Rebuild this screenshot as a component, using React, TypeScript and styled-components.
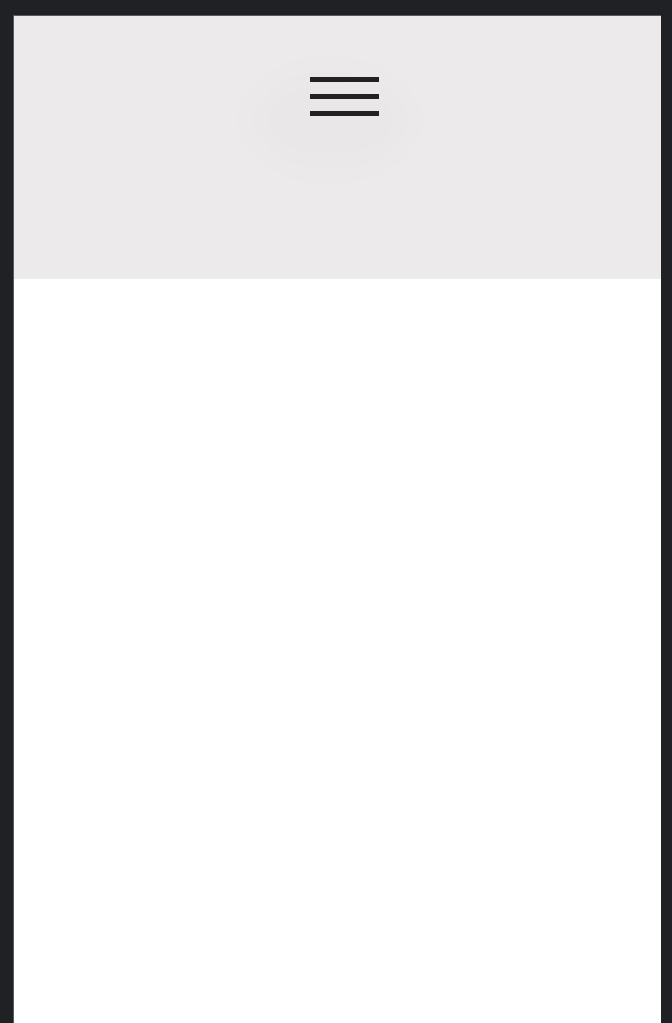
import React, { FC } from "react";
import styled, { createGlobalStyle } from "styled-components";

const GlobalStyle = createGlobalStyle`
  html, body {
    margin: 0;
    padding: 0;
    height: 100%;
    background: #202124;
    font-family: "Liberation Sans", Arial, sans-serif;
  }
  #root {
    height: 100%;
  }
`;

const Frame = styled.div`
  box-sizing: border-box;
  height: 100%;
  padding: 15px 11px 0 13px;
`;

const Screen = styled.div`
  height: 100%;
  background: #ffffff;
  border-left: 1px solid #5a5a5c;
  border-top: 1px solid #5a5a5c;
  display: flex;
  flex-direction: column;
`;

const Header = styled.header`
  height: 263px;
  background: #eceaeb;
  display: flex;
  justify-content: center;
  align-items: flex-start;
  padding-top: 46px;
  box-sizing: border-box;
`;

const MenuButton = styled.button`
  position: relative;
  width: 90px;
  height: 60px;
  margin-left: 14px;
  border: 0;
  padding: 0;
  background: transparent;
  display: flex;
  justify-content: center;
  cursor: pointer;

  &::before {
    content: "";
    position: absolute;
    left: -50px;
    top: 8px;
    width: 160px;
    height: 100px;
    border-radius: 50%;
    background: rgba(0, 0, 0, 0.012);
    filter: blur(16px);
  }
`;

const Bars = styled.span`
  position: relative;
  display: flex;
  flex-direction: column;
  gap: 12px;
  padding-top: 15px;
`;

const Bar = styled.span`
  display: block;
  width: 69px;
  height: 5px;
  background: #222222;
`;

const Content = styled.main`
  flex: 1;
  background: #ffffff;
`;

const App: FC = () => {
  return (
    <>
      <GlobalStyle />
      <Frame>
        <Screen>
          <Header>
            <MenuButton aria-label="Menu">
              <Bars>
                <Bar />
                <Bar />
                <Bar />
              </Bars>
            </MenuButton>
          </Header>
          <Content />
        </Screen>
      </Frame>
    </>
  );
};

export default App;
